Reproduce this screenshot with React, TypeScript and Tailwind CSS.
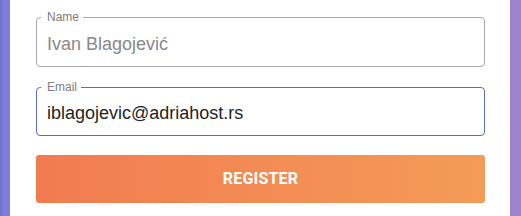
import React from "react";

export default function App() {
  return (
    <div className="w-[521px] h-[216px] overflow-hidden bg-gradient-to-r from-[#7a7ed8] to-[#9c84cd] flex">
      <div className="w-[2px] h-full bg-[#6f72cf]" />
      <div className="ml-[8px] w-[500px] h-full bg-white pl-[26px] pr-[25px] pt-[11px] flex flex-col" style={{ fontFamily: '"Liberation Sans", Arial, sans-serif' }}>
        <fieldset className="border border-[#a9a9a9] rounded-[4px] m-0 p-0">
          <legend className="ml-[4px] pl-[6px] pr-[4px] text-[12px] leading-[13px] text-[#7d7d7d]">Name</legend>
          <input
            readOnly
            value="Ivan Blagojević"
            className="block w-full h-[42px] pl-[10px] pb-[2px] text-[18px] text-[#888888] bg-transparent outline-none"
            style={{ fontFamily: '"Liberation Sans", Arial, sans-serif' }}
          />
        </fieldset>
        <fieldset className="mt-[14px] border border-[#5d68c8] rounded-[4px] m-0 p-0">
          <legend className="ml-[4px] pl-[6px] pr-[4px] text-[12px] leading-[13px] text-[#7d7d7d]">Email</legend>
          <input
            readOnly
            value="iblagojevic@adriahost.rs"
            className="block w-full h-[41px] pl-[10px] pb-[2px] text-[18px] text-[#1f1f1f] bg-transparent outline-none"
            style={{ fontFamily: '"Liberation Sans", Arial, sans-serif' }}
          />
        </fieldset>
        <button
          className="mt-[19px] h-[48px] w-full rounded-[3px] bg-gradient-to-r from-[#f17b50] to-[#f49b58] text-white text-[16px] font-bold tracking-[0.2px]"
          style={{ fontFamily: 'Roboto, "Liberation Sans", sans-serif' }}
        >
          REGISTER
        </button>
      </div>
    </div>
  );
}
